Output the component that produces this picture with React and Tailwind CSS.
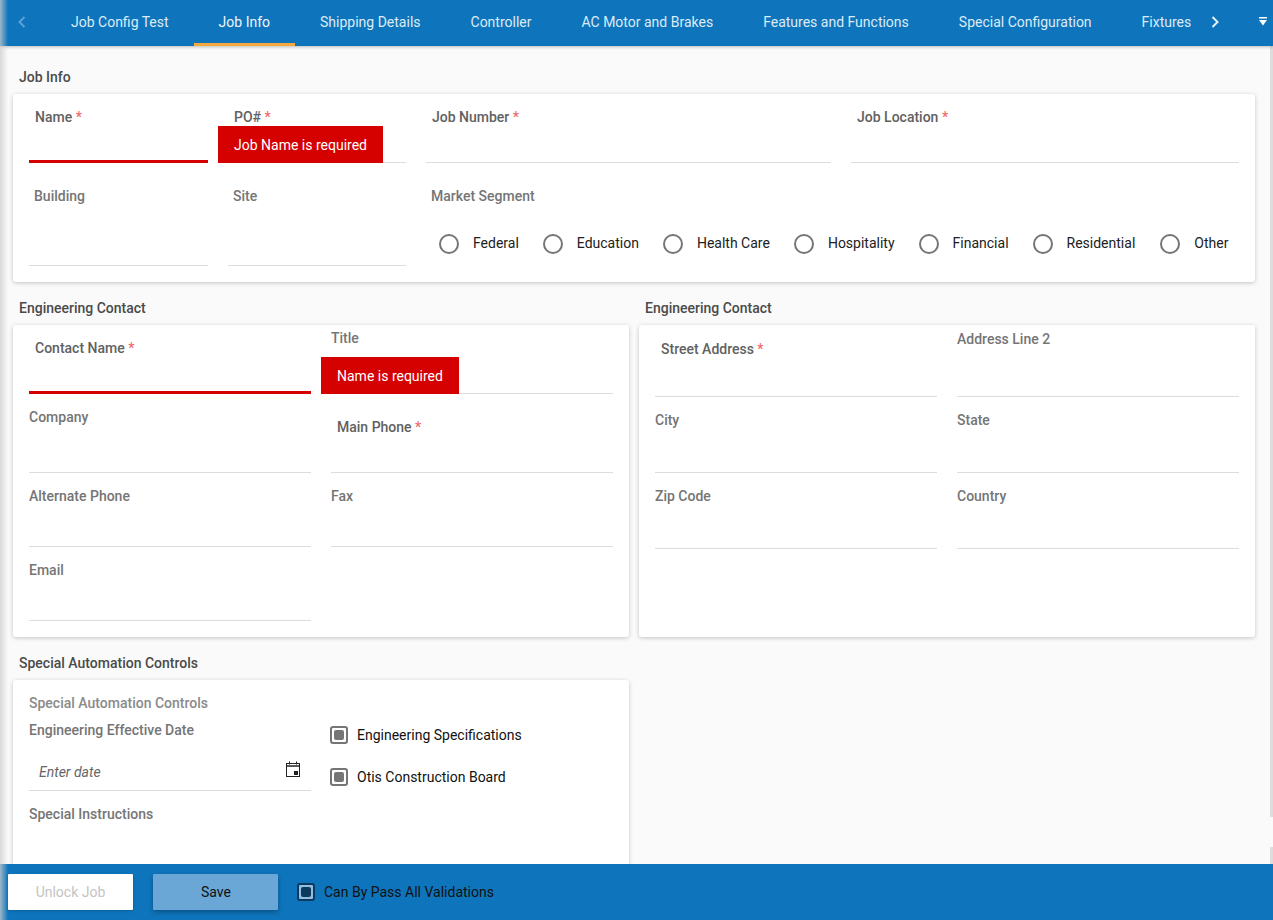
import React from "react";

const tabs = ["Job Config Test", "Job Info", "Shipping Details", "Controller", "AC Motor and Brakes", "Features and Functions", "Special Configuration", "Fixtures"];
const markets = [
  ["Federal", "mr-[24px]"],
  ["Education", "mr-[24px]"],
  ["Health Care", "mr-[24px]"],
  ["Hospitality", "mr-[24px]"],
  ["Financial", "mr-[24px]"],
  ["Residential", "mr-[25px]"],
  ["Other", ""],
];

function Field({ label, required, error, message, className = "", labelClass = "", msgClass = "" }) {
  return (
    <div className={`relative flex flex-col ${error ? "border-b-[3px] border-[#d50000]" : "border-b border-[#dcdcdc]"} ${className}`}>
      <div className={`h-5 leading-5 text-[14px] font-medium whitespace-nowrap ${required ? "text-[#616161]" : "text-[#757575]"} ${labelClass}`}>
        {label}
        {required && <span className="text-[#f26a6a]"> *</span>}
      </div>
      {message && (
        <div className={`absolute -bottom-px h-[37px] flex items-center px-4 pt-[2px] bg-[#d50000] text-white text-[14px] whitespace-nowrap ${msgClass}`}>{message}</div>
      )}
    </div>
  );
}

function Heading({ children }) {
  return <h2 className="h-5 leading-5 text-[14px] font-medium text-[#4a4a4a] pl-[19px]">{children}</h2>;
}

function Radio({ label, className }) {
  return (
    <div className={`flex items-center ${className}`}>
      <span className="w-5 h-5 rounded-full border-2 border-[#757575] mr-[14px]" />
      <span className="text-[14px] text-[#212121]">{label}</span>
    </div>
  );
}

function Check({ label }) {
  return (
    <div className="flex items-center h-5 -ml-px">
      <span className="w-[18px] h-[18px] rounded-[3px] border-2 border-[#757575] flex items-center justify-center mr-[9px]">
        <span className="w-[10px] h-[10px] rounded-[2px] bg-[#757575]" />
      </span>
      <span className="text-[14px] text-[#111]">{label}</span>
    </div>
  );
}

export default function App() {
  return (
    <div className="relative h-[920px] w-full overflow-hidden flex flex-col bg-[#fafafa]" style={{ fontFamily: "Roboto, sans-serif" }}>
      <div className="absolute top-0 bottom-0 left-0 w-2 z-20 bg-gradient-to-r from-[rgba(205,205,205,0.75)] to-transparent" />
      <header className="h-[46px] shrink-0 bg-[#0e75bc] flex items-stretch relative z-10 shadow-[0_1px_3px_rgba(0,0,0,0.25)]">
        <div className="w-[46px] shrink-0 flex items-center pl-[17px] pb-[2px] text-[#5f9fd3]">
          <svg width="10" height="14" viewBox="0 0 10 14" fill="none" stroke="currentColor" strokeWidth="2"><path d="M7.5 2 2.5 7 7.5 12" /></svg>
        </div>
        <div className="w-[1154px] flex overflow-hidden">
          {tabs.map((t) => (
            <div key={t} className={`px-[25px] flex items-center whitespace-nowrap text-[14px] border-b-[3px] pt-px ${t === "Job Info" ? "border-[#f5a83c] text-[#eef5fb]" : "border-transparent text-[#dcebf7]"}`}>{t}</div>
          ))}
        </div>
        <div className="w-[10px] ml-[10px] flex items-center pb-[2px] text-[#e6f1fa]">
          <svg width="10" height="14" viewBox="0 0 10 14" fill="none" stroke="currentColor" strokeWidth="2"><path d="M2.5 2 7.5 7 2.5 12" /></svg>
        </div>
        <div className="ml-[38px] pt-[17px]">
          <svg width="10" height="9" viewBox="0 0 10 9" fill="white"><rect x="1" y="0" width="8" height="1.5" /><path d="M1 3h8L5 8.5z" /></svg>
        </div>
      </header>

      <main className="flex-1 min-h-0 overflow-hidden relative pt-[21px]">
        <div className="absolute top-0 bottom-[103px] right-0 w-[3px] bg-[#dcdcdc]" />
        <div className="absolute bottom-[56px] h-[17px] right-0 w-[3px] bg-[#dcdcdc]" />

        <Heading>Job Info</Heading>
        <section className="mx-[13px] mt-[7px] w-[1242px] h-[188px] bg-white rounded-[3px] shadow-[0_1px_4px_rgba(0,0,0,0.22)] px-4 pt-[13px]">
          <div className="flex gap-5 h-[56px]">
            <Field label="Name" required error className="w-[179px]" labelClass="pl-[6px]" />
            <Field label="PO#" required className="w-[178px]" labelClass="pl-[6px]" message="Job Name is required" msgClass="-left-[10px]" />
            <Field label="Job Number" required className="w-[405px]" labelClass="pl-[6px]" />
            <Field label="Job Location" required className="w-[388px]" labelClass="pl-[6px]" />
          </div>
          <div className="flex gap-5 h-[80px] mt-[23px]">
            <Field label="Building" className="w-[179px]" labelClass="pl-[5px]" />
            <Field label="Site" className="w-[178px]" labelClass="pl-[5px]" />
            <div className="flex-1 flex flex-col">
              <div className="h-5 leading-5 text-[14px] font-medium text-[#757575] pl-[5px]">Market Segment</div>
              <div className="flex mt-[27px] pl-[13px]">
                {markets.map(([m, c]) => <Radio key={m} label={m} className={c} />)}
              </div>
            </div>
          </div>
        </section>

        <div className="flex mt-[16px]">
          <div className="w-[626px]"><Heading>Engineering Contact</Heading></div>
          <div><Heading>Engineering Contact</Heading></div>
        </div>
        <div className="flex gap-[10px] mx-[13px] mt-[7px]">
          <section className="w-[616px] h-[312px] bg-white rounded-[3px] shadow-[0_1px_4px_rgba(0,0,0,0.22)] px-4 pt-[3px]">
            <div className="grid grid-cols-[282px_282px] gap-x-5 grid-rows-[66px_66px_61px_61px] gap-y-[13px]">
              <Field label="Contact Name" required error labelClass="pl-[6px] pt-[10px] box-content" />
              <Field label="Title" message="Name is required" msgClass="-left-[10px]" />
              <Field label="Company" />
              <Field label="Main Phone" required labelClass="pl-[6px] pt-[10px] box-content" />
              <Field label="Alternate Phone" />
              <Field label="Fax" />
              <Field label="Email" />
            </div>
          </section>
          <section className="w-[616px] h-[312px] bg-white rounded-[3px] shadow-[0_1px_4px_rgba(0,0,0,0.22)] px-4 pt-1">
            <div className="grid grid-cols-[282px_282px] gap-x-5 grid-rows-[68px_63px_63px] gap-y-[13px]">
              <Field label="Street Address" required labelClass="pl-[6px] pt-[10px] box-content" />
              <Field label="Address Line 2" />
              <Field label="City" />
              <Field label="State" />
              <Field label="Zip Code" />
              <Field label="Country" />
            </div>
          </section>
        </div>

        <div className="mt-[16px]"><Heading>Special Automation Controls</Heading></div>
        <section className="mx-[13px] mt-[7px] w-[616px] h-[260px] bg-white rounded-[3px] shadow-[0_1px_4px_rgba(0,0,0,0.22)] px-4 pt-[13px]">
          <div className="h-5 leading-5 text-[14px] font-medium text-[#8a8a8a]">Special Automation Controls</div>
          <div className="flex gap-5 mt-[7px]">
            <div className="w-[282px]">
              <div className="h-5 leading-5 text-[14px] font-medium text-[#757575]">Engineering Effective Date</div>
              <div className="h-[41px] mt-[10px] flex items-start justify-between border-b border-[#dcdcdc] pl-[10px] pr-[10px] pt-[12px]">
                <span className="italic text-[14px] leading-5 text-[#666]">Enter date</span>
                <svg className="-mt-px" width="16" height="17" viewBox="0 0 16 17" fill="none" stroke="#212121" strokeWidth="1">
                  <rect x="1.5" y="2.5" width="13" height="13" />
                  <path d="M1.5 5h13" strokeWidth="1.5" />
                  <path d="M4.5 0.5v3M11.5 0.5v3" />
                  <rect x="9" y="10" width="4" height="4" fill="#212121" stroke="none" />
                </svg>
              </div>
              <div className="h-5 leading-5 mt-[13px] text-[14px] font-medium text-[#757575]">Special Instructions</div>
            </div>
            <div className="pt-[5px] flex flex-col gap-[22px]">
              <Check label="Engineering Specifications" />
              <Check label="Otis Construction Board" />
            </div>
          </div>
        </section>
      </main>

      <footer className="absolute left-0 right-0 bottom-0 h-[56px] bg-[#0e75bc] flex items-center pl-2 z-10">
        <button className="w-[125px] h-9 bg-white rounded-[1px] text-[14px] text-[#c4c4c4] shadow-[0_1px_3px_rgba(0,0,0,0.2)]">Unlock Job</button>
        <button className="w-[125px] h-9 ml-5 pl-px bg-[#6aa7d6] rounded-[1px] text-[14px] text-[#111] shadow-[0_2px_5px_rgba(0,0,0,0.3)]">Save</button>
        <span className="ml-[19px] w-[18px] h-[18px] rounded-[3px] border-2 border-[#0d3a5c] bg-[#8fbfe3] flex items-center justify-center">
          <span className="w-[10px] h-[10px] rounded-[2px] bg-[#0d3a5c]" />
        </span>
        <span className="ml-[9px] text-[14px] text-[#111]">Can By Pass All Validations</span>
      </footer>
    </div>
  );
}
